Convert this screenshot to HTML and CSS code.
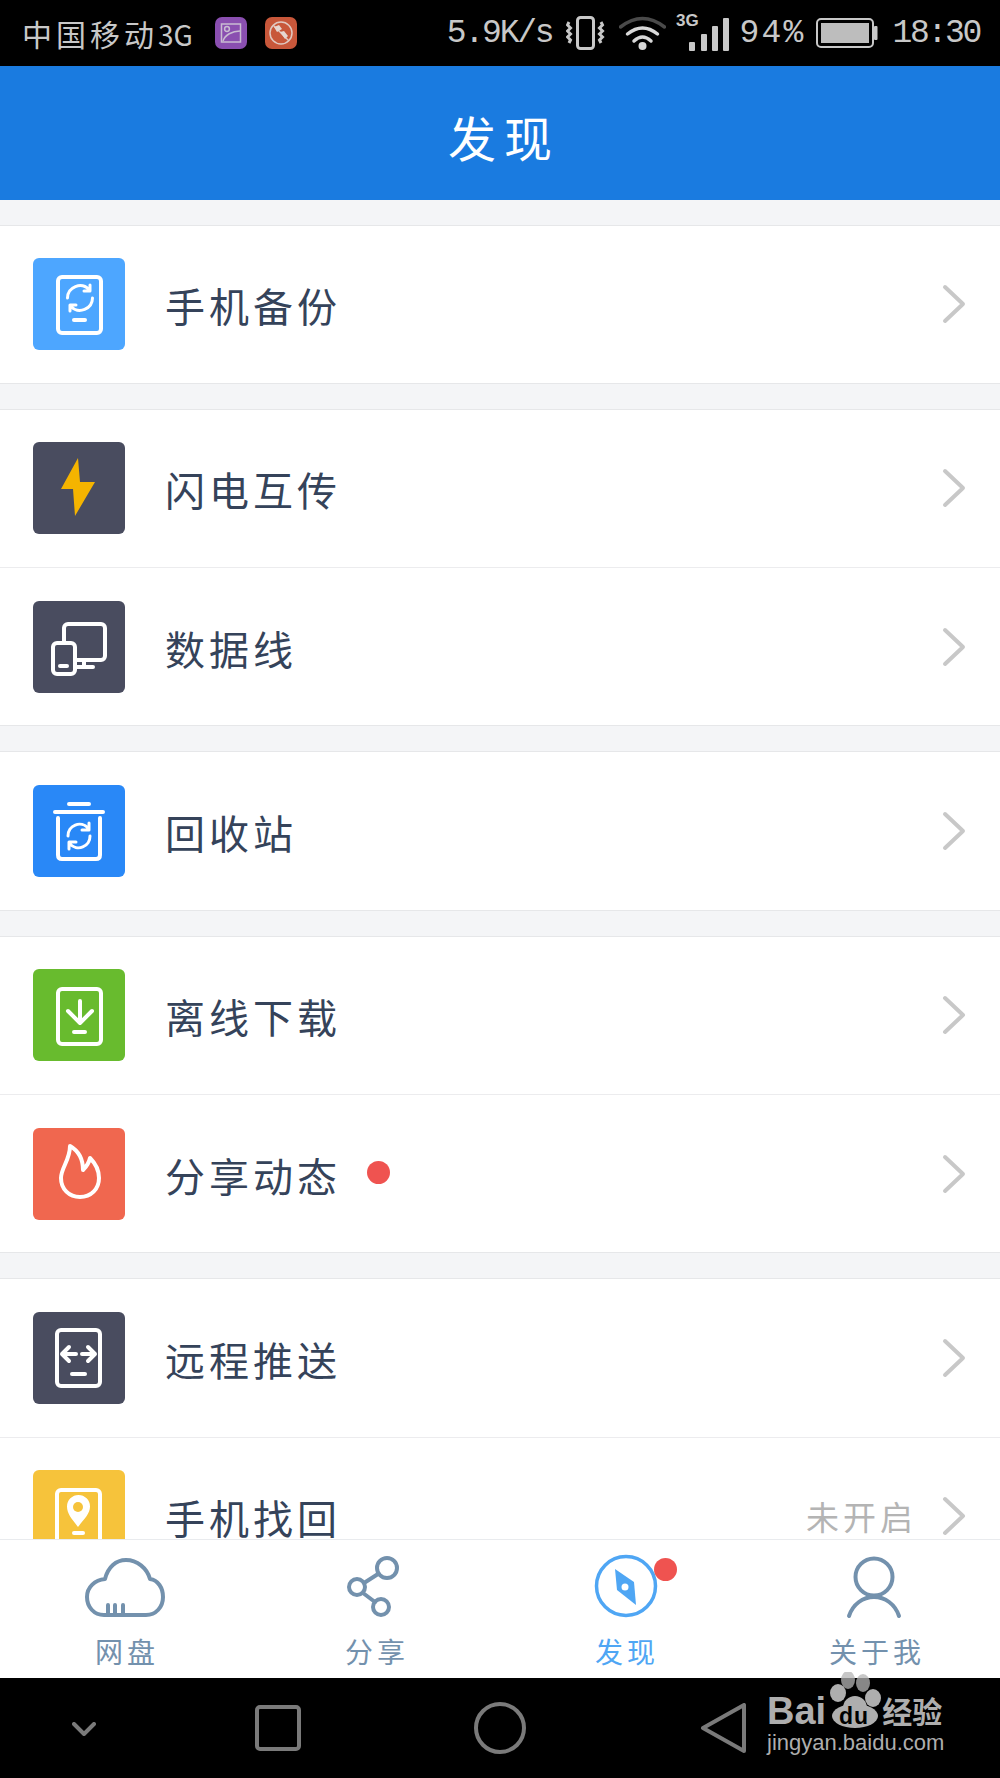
FILE: index.html
```html
<!DOCTYPE html>
<html lang="zh-CN">
<head>
<meta charset="utf-8">
<title>发现</title>
<link rel="stylesheet" href="styles.css">
</head>
<body>
<div class="screen">

  <!-- system status bar -->
  <div class="status">
    <div class="status-left">
      <span class="carrier">中国移动<span class="carrier-net">3G</span></span>
      <svg class="notif notif-gallery" width="32" height="32" viewBox="0 0 32 32">
        <rect width="32" height="32" rx="7" fill="#8a4fb0"/>
        <g fill="none" stroke="#c9bcd2" stroke-width="1.5">
          <rect x="6.5" y="7" width="19" height="18"/>
          <circle cx="12" cy="12" r="2.4"/>
          <path d="M8 24C10 18 17 14 25 14"/>
        </g>
      </svg>
      <svg class="notif notif-mute" width="32" height="32" viewBox="0 0 32 32">
        <rect width="32" height="32" rx="7" fill="#c8573a"/>
        <g fill="none" stroke="#e0c8c0" stroke-width="1.5">
          <circle cx="16" cy="16" r="11"/>
          <path d="M8 8L24 24"/>
        </g>
        <path d="M9 10l5-2 3 4-5 3zM15 15l4-1 4 5-3 3z" fill="#e6d6d0"/>
      </svg>
    </div>
    <div class="status-right">
      <span class="speed">5.9K/s</span>
      <svg class="st-vibrate" width="39" height="34" viewBox="0 0 39 34">
        <rect x="11.5" y="1.5" width="16" height="31" rx="3" fill="none" stroke="#c8c8c8" stroke-width="3"/>
        <path class="zig" d="M3 6l-1.5 3 3 3-3 3 3 3-3 3 3 3-1.5 3"/>
        <path class="zig" d="M35 6l1.5 3-3 3 3 3-3 3 3 3-3 3 1.500 3"/>
      </svg>
      <svg class="st-wifi" width="47" height="34" viewBox="0 0 47 34">
        <path d="M1.500 11Q23.500-6 45.500 11" fill="none" stroke="#4a4a4a" stroke-width="3.500" stroke-linecap="round"/>
        <path d="M8.500 18Q23.500 6 38.500 18M15 25Q23.500 17 32 25" fill="none" stroke="#d8d8d8" stroke-width="3.500" stroke-linecap="round"/>
        <circle cx="23.500" cy="30" r="4" fill="#d8d8d8"/>
      </svg>
      <svg class="st-net" width="53" height="44" viewBox="0 0 53 44">
        <text class="net-label" x="0" y="17">3G</text>
        <rect x="13" y="33" width="6" height="9" rx="1" fill="#c8c8c8"/>
        <rect x="25" y="25" width="6" height="17" rx="1" fill="#c8c8c8"/>
        <rect x="36" y="17" width="6" height="25" rx="1" fill="#c8c8c8"/>
        <rect x="47" y="9" width="6" height="33" rx="1" fill="#c8c8c8"/>
      </svg>
      <span class="pct">94%</span>
      <svg class="st-battery" width="62" height="30" viewBox="0 0 62 30">
        <rect x="1" y="1" width="56" height="28" rx="4" fill="none" stroke="#c8c8c8" stroke-width="2"/>
        <rect x="5" y="5" width="48" height="20" fill="#bdbdbd"/>
        <rect x="58" y="8" width="3.500" height="14" rx="1" fill="#c8c8c8"/>
      </svg>
      <span class="time">18:30</span>
    </div>
  </div>

  <!-- page title -->
  <header class="title-bar"><h1 class="title">发现</h1></header>

  <!-- feature list, clipped by the tab bar -->
  <main class="list">
    <section class="group">
      <div class="row">
        <svg class="tile tile-sky" viewBox="0 0 92 92">
          <g class="glyph">
            <rect x="25" y="19" width="43" height="56" rx="4"/>
            <path d="M41 62H52"/>
            <path class="thin" d="M34.500 40A12.500 12.500 0 0 1 56 31.500M57 27V33H51"/>
            <path class="thin" d="M59.500 40A12.500 12.500 0 0 1 38 48.500M37 53V47H43"/>
          </g>
        </svg>
        <span class="label">手机备份</span>
        <svg class="chev" width="24" height="40" viewBox="0 0 24 40"><path d="M3 3L21 20L3 37"/></svg>
      </div>
    </section>

    <section class="group">
      <div class="row">
        <svg class="tile tile-slate" viewBox="0 0 92 92">
          <path d="M45 16L28 47H40L42 74L62 40H47Z" fill="#f5b400"/>
        </svg>
        <span class="label">闪电互传</span>
        <svg class="chev" width="24" height="40" viewBox="0 0 24 40"><path d="M3 3L21 20L3 37"/></svg>
      </div>
      <div class="row">
        <svg class="tile tile-slate" viewBox="0 0 92 92">
          <g class="glyph">
            <rect x="31" y="23" width="41" height="36" rx="4"/>
            <path d="M43 66H60M51 59V66"/>
            <rect class="glyph-cut" x="20" y="42" width="22" height="31" rx="4"/>
            <path d="M27 65H34"/>
          </g>
        </svg>
        <span class="label">数据线</span>
        <svg class="chev" width="24" height="40" viewBox="0 0 24 40"><path d="M3 3L21 20L3 37"/></svg>
      </div>
    </section>

    <section class="group">
      <div class="row">
        <svg class="tile tile-blue" viewBox="0 0 92 92">
          <g class="glyph">
            <path d="M36 19H56M22 27H70"/>
            <path d="M25 33V70Q25 74 29 74H63Q67 74 67 70V33"/>
            <path class="thin" d="M35 51A11.500 11.500 0 0 1 55 43M56 38V45H49"/>
            <path class="thin" d="M57 51A11.500 11.500 0 0 1 37 59M36 64V57H43"/>
          </g>
        </svg>
        <span class="label">回收站</span>
        <svg class="chev" width="24" height="40" viewBox="0 0 24 40"><path d="M3 3L21 20L3 37"/></svg>
      </div>
    </section>

    <section class="group">
      <div class="row">
        <svg class="tile tile-green" viewBox="0 0 92 92">
          <g class="glyph">
            <rect x="25" y="20" width="43" height="55" rx="4"/>
            <path d="M41 63H52M47 32V53M35 42L47 54L59 42"/>
          </g>
        </svg>
        <span class="label">离线下载</span>
        <svg class="chev" width="24" height="40" viewBox="0 0 24 40"><path d="M3 3L21 20L3 37"/></svg>
      </div>
      <div class="row">
        <svg class="tile tile-coral" viewBox="0 0 92 92">
          <path class="glyph" d="M37 18C44 22 50 30 50 42C53 39 56 35 57 30C63 36 66 43 66 50C66 61 58 69 47 69C36 69 28 61 28 50C28 40 37 32 37 18Z"/>
        </svg>
        <span class="label">分享动态</span>
        <i class="dot"></i>
        <svg class="chev" width="24" height="40" viewBox="0 0 24 40"><path d="M3 3L21 20L3 37"/></svg>
      </div>
    </section>

    <section class="group">
      <div class="row">
        <svg class="tile tile-slate" viewBox="0 0 92 92">
          <g class="glyph">
            <rect x="24" y="18" width="43" height="56" rx="4"/>
            <path d="M39 62H52"/>
            <path d="M43 42H29M36 35L29 42L36 49M49 42H62M55 35L62 42L55 49"/>
          </g>
        </svg>
        <span class="label">远程推送</span>
        <svg class="chev" width="24" height="40" viewBox="0 0 24 40"><path d="M3 3L21 20L3 37"/></svg>
      </div>
      <div class="row">
        <svg class="tile tile-amber" viewBox="0 0 92 92">
          <g class="glyph">
            <rect x="24" y="20" width="43" height="56" rx="4"/>
            <path d="M41 63H50"/>
          </g>
          <path d="M45 57C39 49 34 44 34 36.500A11.500 11.500 0 0 1 57 36.500C57 44 51 49 45 57Z" fill="#fff"/>
          <circle cx="45" cy="37" r="5" fill="#f6c33b"/>
        </svg>
        <span class="label">手机找回</span>
        <span class="state">未开启</span>
        <svg class="chev" width="24" height="40" viewBox="0 0 24 40"><path d="M3 3L21 20L3 37"/></svg>
      </div>
    </section>
  </main>

  <!-- app tabs -->
  <nav class="tabs">
    <div class="tab">
      <svg class="tab-icon" width="100" height="70" viewBox="0 0 100 70">
        <path d="M29 63C19 63 12 55 12 45C12 35 20 28 30 27C33 15 41 8 51 8C62 8 72 16 75 27C83 28 88 36 88 45C88 55 81 63 71 63Z"/>
        <path d="M33 53V63M40 53V63M48 53V63"/>
      </svg>
      <span class="tab-label">网盘</span>
    </div>
    <div class="tab">
      <svg class="tab-icon" width="100" height="70" viewBox="0 0 100 70">
        <circle cx="62" cy="16" r="10"/>
        <circle cx="32" cy="35" r="8"/>
        <circle cx="56" cy="55" r="8"/>
        <path d="M53 22L39 31M38 41L50 50"/>
      </svg>
      <span class="tab-label">分享</span>
    </div>
    <div class="tab tab-active">
      <svg class="tab-icon" width="100" height="70" viewBox="0 0 100 70">
        <circle cx="51" cy="34" r="29.500"/>
        <path class="needle" d="M40 17L59 30L61 53L42 38Z"/>
        <circle class="needle-hole" cx="50" cy="35" r="3.500"/>
      </svg>
      <i class="tab-badge"></i>
      <span class="tab-label">发现</span>
    </div>
    <div class="tab">
      <svg class="tab-icon" width="100" height="70" viewBox="0 0 100 70">
        <circle cx="49" cy="25" r="18.500"/>
        <path d="M24 64C28 52 38 45 49 45C60 45 70 52 74 64"/>
      </svg>
      <span class="tab-label">关于我</span>
    </div>
  </nav>

  <!-- system navigation keys -->
  <div class="keys">
    <svg class="key key-hide" width="24" height="14" viewBox="0 0 24 14"><path d="M2 2L12 12L22 2"/></svg>
    <svg class="key key-recent" width="46" height="46" viewBox="0 0 46 46"><rect x="2" y="2" width="42" height="42" rx="3"/></svg>
    <svg class="key key-home" width="52" height="52" viewBox="0 0 52 52"><circle cx="26" cy="26" r="24"/></svg>
    <svg class="key key-back" width="46" height="50" viewBox="0 0 46 50"><path d="M3 25L44 2V48Z"/></svg>
  </div>

  <!-- site mark laid over the corner -->
  <div class="mark">
    <div class="mark-top">
      <span class="mark-bai">Bai</span>
      <svg class="mark-paw" width="58" height="58" viewBox="0 0 58 58">
        <ellipse cx="23" cy="8" rx="7" ry="9" class="toe"/>
        <ellipse cx="38" cy="11" rx="7" ry="9" class="toe"/>
        <ellipse cx="13" cy="21" rx="8" ry="9"/>
        <ellipse cx="48" cy="26" rx="8" ry="9"/>
        <ellipse cx="30" cy="44" rx="23" ry="12"/>
        <circle cx="30" cy="36" r="12"/>
        <text class="paw-du" x="29" y="52">du</text>
      </svg>
      <span class="mark-cn">经验</span>
    </div>
    <div class="mark-url">jingyan.baidu.com</div>
  </div>
</div>
</body>
</html>
```

FILE: styles.css
```css
* { box-sizing: border-box; }

html, body { margin: 0; padding: 0; background: #000; }

body {
  font-family: "Noto Sans CJK SC", "Noto Sans", sans-serif;
}

.screen {
  position: relative;
  display: flex;
  flex-direction: column;
  width: 1000px;
  height: 1778px;
  overflow: hidden;
}

/* status bar */
.status {
  flex: none;
  display: flex;
  justify-content: space-between;
  align-items: center;
  height: 66px;
  padding: 0 20px 0 22px;
  background: #000;
  color: #c8c8c8;
}

.status-left, .status-right { display: flex; align-items: center; }

.carrier { font-size: 30px; letter-spacing: 4px; line-height: 1; width: 177px; white-space: nowrap; }
.carrier-net { font-size: 28px; letter-spacing: 0; }
.notif-gallery { margin-left: 16px; }
.notif-mute { margin-left: 18px; }

.speed, .pct, .time { font-family: "Liberation Mono", monospace; line-height: 1; white-space: nowrap; }
.speed { font-size: 33px; letter-spacing: -2.200px; }
.pct { font-size: 33px; letter-spacing: 2.200px; margin-left: 10px; }
.time { font-size: 33px; letter-spacing: -2.300px; margin-left: 14px; }

.st-vibrate { margin-left: 14px; }
.st-wifi { margin-left: 14px; }
.st-net { margin-left: 10px; margin-top: -4px; }
.st-battery { margin-left: 11px; }

.zig { fill: none; stroke: #c8c8c8; stroke-width: 3; }
.net-label { font: bold 17px "Liberation Sans", sans-serif; fill: #c8c8c8; }

/* title */
.title-bar {
  flex: none;
  display: flex;
  align-items: center;
  justify-content: center;
  height: 134px;
  background: #1a7be0;
}

.title {
  margin: 6px 0 0;
  padding-left: 8px;
  font-size: 48px;
  font-weight: 400;
  letter-spacing: 8px;
  line-height: 1;
  color: #fff;
}

/* list */
.list {
  flex: 1;
  min-height: 0;
  overflow: hidden;
  display: flex;
  flex-direction: column;
  gap: 25px;
  padding-top: 24.500px;
  background: #f4f5f7;
}

.group {
  flex: none;
  background: #fff;
  border-top: 1px solid #e6e7e9;
  border-bottom: 1px solid #e6e7e9;
}

.row {
  display: flex;
  align-items: center;
  height: 157.300px;
  padding: 0 34px 0 33px;
}

.row + .row { height: 158.300px; border-top: 1px solid #ececee; }

.tile { flex: none; width: 92px; height: 92px; border-radius: 6px; }
.tile-sky { background: #4da6ff; }
.tile-slate { background: #494c5f; }
.tile-blue { background: #2988f7; }
.tile-green { background: #68bb2e; }
.tile-coral { background: #f0674f; }
.tile-amber { background: #f6c33b; }

.glyph {
  fill: none;
  stroke: #fff;
  stroke-width: 4;
  stroke-linecap: round;
  stroke-linejoin: round;
}

.glyph .thin { stroke-width: 3; }
.glyph-cut { fill: #494c5f; }

.label {
  margin-left: 40px;
  padding-top: 2px;
  font-size: 40px;
  letter-spacing: 4px;
  line-height: 1;
  color: #35435a;
  white-space: nowrap;
}

.dot {
  width: 23px;
  height: 23px;
  margin: 0 0 2px 26px;
  border-radius: 50%;
  background: #ef5350;
}

.state {
  margin-left: auto;
  margin-right: 25px;
  font-size: 33px;
  letter-spacing: 4px;
  line-height: 1;
  color: #b4b4b4;
}

.chev {
  flex: none;
  margin-left: auto;
  fill: none;
  stroke: #c8c8c8;
  stroke-width: 4;
  stroke-linecap: round;
  stroke-linejoin: round;
}

.state + .chev { margin-left: 0; }

/* tabs */
.tabs {
  flex: none;
  display: flex;
  height: 139px;
  padding-top: 12px;
  background: #fff;
  border-top: 1px solid #e9ebee;
}

.tab {
  position: relative;
  flex: 1;
  display: flex;
  flex-direction: column;
  align-items: center;
  color: #7391ad;
}

.tab-active { color: #4fa6f4; }

.tab-icon {
  fill: none;
  stroke: currentColor;
  stroke-width: 4;
  stroke-linecap: round;
  stroke-linejoin: round;
}

.tab-active .tab-icon { stroke-width: 3.500; }
.needle { fill: currentColor; stroke: none; }
.needle-hole { fill: #fff; stroke: none; }

.tab-label {
  margin-top: 15px;
  padding-left: 4px;
  font-size: 28px;
  letter-spacing: 4px;
  line-height: 1;
}

.tab-badge {
  position: absolute;
  top: 6px;
  left: 154px;
  width: 23px;
  height: 23px;
  border-radius: 50%;
  background: #ef5350;
}

/* navigation keys */
.keys {
  flex: none;
  display: flex;
  align-items: center;
  height: 100px;
  padding-left: 72px;
  background: #000;
}

.key {
  flex: none;
  fill: none;
  stroke: #7a7a7a;
  stroke-width: 4;
  stroke-linecap: round;
  stroke-linejoin: round;
}

.key-hide { margin-top: 2px; }
.key-recent { margin-left: 159px; }
.key-home { margin-left: 173px; }
.key-back { margin-left: 174px; }

/* corner mark */
.mark {
  position: absolute;
  left: 767px;
  top: 1672px;
  color: #aeaeae;
}

.mark-top { display: flex; align-items: flex-end; height: 58px; }

.mark-bai {
  font: bold 38px/1 "Liberation Sans", sans-serif;
}

.mark-paw { fill: #aeaeae; margin-left: -1px; }
.mark-paw .toe { fill: #b4b4b4; fill-opacity: .75; }

.paw-du {
  font: bold 23px "Liberation Sans", sans-serif;
  letter-spacing: 1px;
  fill: #000;
  text-anchor: middle;
}

.mark-cn {
  font-size: 30px;
  font-weight: 700;
  line-height: 30px;
  margin-left: -1px;
  margin-bottom: 5px;
}

.mark-url {
  margin-top: 2px;
  font: 22px/22px "Liberation Sans", sans-serif;
  white-space: nowrap;
}
```
